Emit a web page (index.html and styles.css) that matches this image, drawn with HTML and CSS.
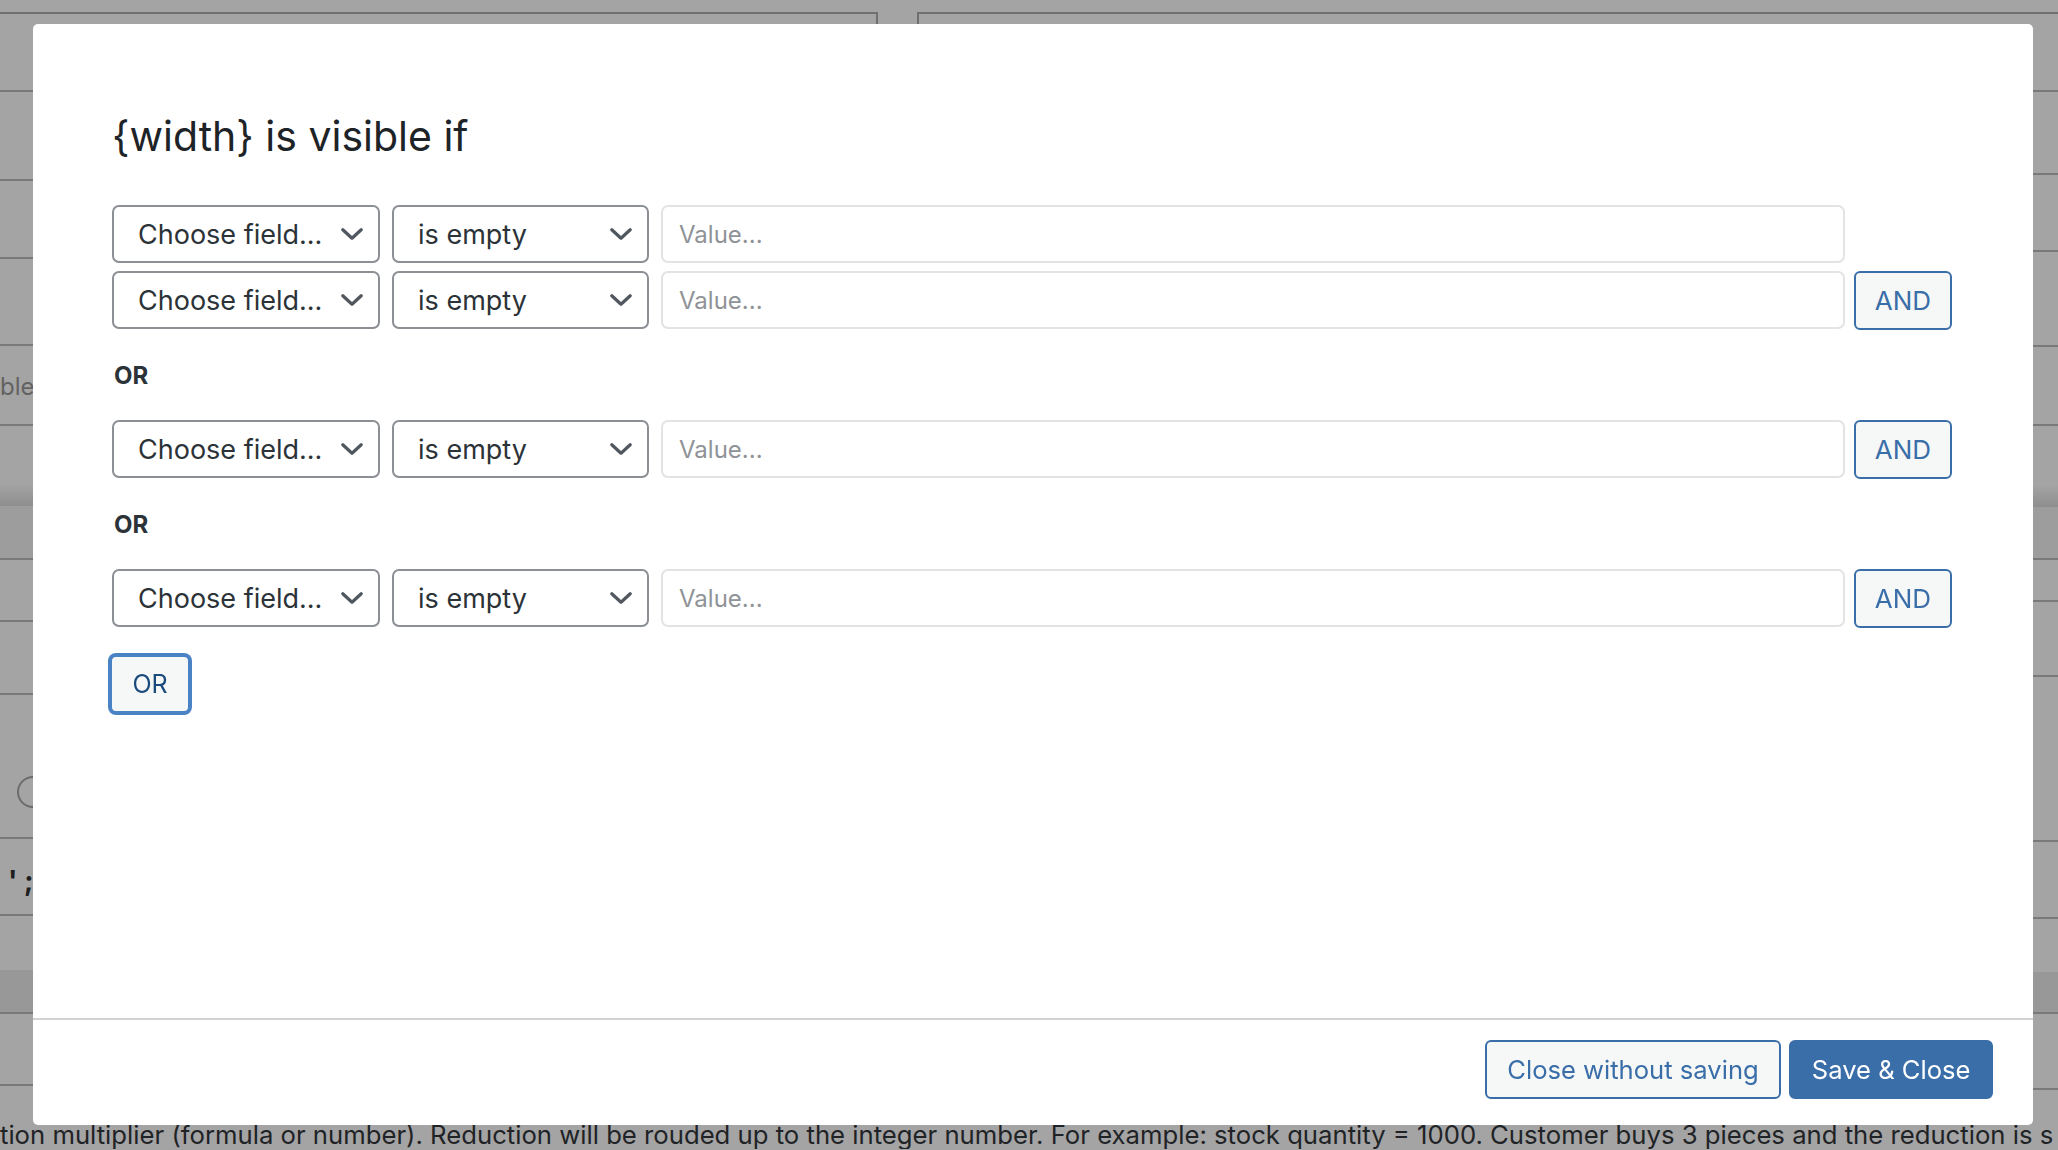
FILE: index.html
```html
<!DOCTYPE html>
<html lang="en">
<head>
<meta charset="utf-8">
<title>Visibility conditions</title>
<link rel="stylesheet" href="styles.css">
</head>
<body>
<div class="page-cols">
  <div class="page-col page-col-left">
    <div class="bg-row l1"></div>
    <div class="bg-row l2"></div>
    <div class="bg-row l3"></div>
    <div class="bg-row l4"></div>
    <div class="bg-row l5"><span class="bg-label">ble</span></div>
    <div class="bg-row bg-shade l6"></div>
    <div class="bg-row bg-dim l7"></div>
    <div class="bg-row l8"></div>
    <div class="bg-row l9"></div>
    <div class="bg-row l10"><span class="bg-radio"></span></div>
    <div class="bg-row l11"><span class="bg-code">' ;</span></div>
    <div class="bg-row bg-open l12"></div>
    <div class="bg-row bg-band l13"></div>
    <div class="bg-row l14"></div>
    <div class="bg-row bg-rest"></div>
  </div>
  <div class="page-col page-col-right">
    <div class="bg-row r1"></div>
    <div class="bg-row r2"></div>
    <div class="bg-row r3"></div>
    <div class="bg-row r4"></div>
    <div class="bg-row r5"></div>
    <div class="bg-row bg-shade r6"></div>
    <div class="bg-row bg-dim r7"></div>
    <div class="bg-row r8"></div>
    <div class="bg-row r9"></div>
    <div class="bg-row r10"></div>
    <div class="bg-row r11"></div>
    <div class="bg-row bg-open r12"></div>
    <div class="bg-row bg-band r13"></div>
    <div class="bg-row r14"></div>
    <div class="bg-row bg-rest"></div>
  </div>
</div>
<p class="page-note">tion multiplier (formula or number). Reduction will be rouded up to the integer number. For example: stock quantity = 1000. Customer buys 3 pieces and the reduction is s</p>

<div class="modal" role="dialog" aria-labelledby="modal-title">
  <div class="modal-body">
    <h2 class="modal-title" id="modal-title">{width} is visible if</h2>

    <div class="rule-group">
      <div class="rule-row">
        <div class="select select-field"><span>Choose field...</span><svg class="chevron" viewBox="0 0 22 12" width="22" height="12"><path d="M1.8 1.8 L11 10.2 L20.2 1.8"/></svg></div>
        <div class="select select-op"><span>is empty</span><svg class="chevron" viewBox="0 0 22 12" width="22" height="12"><path d="M1.8 1.8 L11 10.2 L20.2 1.8"/></svg></div>
        <input class="value-input" type="text" placeholder="Value...">
        <span class="btn-and-spacer"></span>
      </div>
      <div class="rule-row">
        <div class="select select-field"><span>Choose field...</span><svg class="chevron" viewBox="0 0 22 12" width="22" height="12"><path d="M1.8 1.8 L11 10.2 L20.2 1.8"/></svg></div>
        <div class="select select-op"><span>is empty</span><svg class="chevron" viewBox="0 0 22 12" width="22" height="12"><path d="M1.8 1.8 L11 10.2 L20.2 1.8"/></svg></div>
        <input class="value-input" type="text" placeholder="Value...">
        <button class="btn btn-secondary btn-and" type="button">AND</button>
      </div>
    </div>

    <div class="or-label">OR</div>

    <div class="rule-group">
      <div class="rule-row">
        <div class="select select-field"><span>Choose field...</span><svg class="chevron" viewBox="0 0 22 12" width="22" height="12"><path d="M1.8 1.8 L11 10.2 L20.2 1.8"/></svg></div>
        <div class="select select-op"><span>is empty</span><svg class="chevron" viewBox="0 0 22 12" width="22" height="12"><path d="M1.8 1.8 L11 10.2 L20.2 1.8"/></svg></div>
        <input class="value-input" type="text" placeholder="Value...">
        <button class="btn btn-secondary btn-and" type="button">AND</button>
      </div>
    </div>

    <div class="or-label">OR</div>

    <div class="rule-group">
      <div class="rule-row">
        <div class="select select-field"><span>Choose field...</span><svg class="chevron" viewBox="0 0 22 12" width="22" height="12"><path d="M1.8 1.8 L11 10.2 L20.2 1.8"/></svg></div>
        <div class="select select-op"><span>is empty</span><svg class="chevron" viewBox="0 0 22 12" width="22" height="12"><path d="M1.8 1.8 L11 10.2 L20.2 1.8"/></svg></div>
        <input class="value-input" type="text" placeholder="Value...">
        <button class="btn btn-secondary btn-and" type="button">AND</button>
      </div>
    </div>

    <button class="btn btn-secondary btn-or is-focused" type="button">OR</button>
  </div>
  <div class="modal-footer">
    <button class="btn btn-secondary btn-footer" type="button">Close without saving</button>
    <button class="btn btn-primary btn-footer" type="button">Save &amp; Close</button>
  </div>
</div>
</body>
</html>
```

FILE: styles.css
```css
* {
  box-sizing: border-box;
}

html,
body {
  margin: 0;
  padding: 0;
}

body {
  width: 2058px;
  height: 1150px;
  overflow: hidden;
  background: #a4a4a4;
  font-family: Inter, "Noto Sans", "Liberation Sans", sans-serif;
  color: #2c3338;
}

/* ---------- background page (dimmed) ---------- */
.page-cols {
  display: flex;
  gap: 39px;
  height: 1120px;
  padding-top: 12px;
}

.page-col {
  display: flex;
  flex-direction: column;
  border-top: 2px solid #6f6f6f;
}

.page-col-left {
  width: 878px;
  border-right: 2px solid #6f6f6f;
}

.page-col-right {
  flex: 1;
  border-left: 2px solid #6f6f6f;
}

.bg-row {
  flex: none;
  border-bottom: 2px solid #797979;
}

.bg-open {
  border-bottom: 0;
}

.bg-shade {
  border-bottom: 0;
  background: linear-gradient(to bottom, #a4a4a4 0, #a4a4a4 calc(100% - 22px), #8e8e8e 100%);
}

.bg-dim {
  background: #9d9d9d;
}

.bg-band {
  background: #989898;
}

.bg-rest {
  flex: 1;
  border-bottom: 0;
}

.l1 { height: 78px; }
.l2 { height: 89px; }
.l3 { height: 78px; }
.l4 { height: 87px; }
.l5 { height: 80px; display: flex; align-items: center; }
.l6 { height: 80px; }
.l7 { height: 54px; }
.l8 { height: 62px; }
.l9 { height: 73px; }
.l10 { height: 144px; padding: 81px 0 0 17px; }
.l11 { height: 77px; padding: 26px 0 0 8px; }
.l12 { height: 54px; }
.l13 { height: 44px; }
.l14 { height: 72px; }

.r1 { height: 78px; }
.r2 { height: 83px; }
.r3 { height: 77px; }
.r4 { height: 95px; }
.r5 { height: 79px; }
.r6 { height: 81px; }
.r7 { height: 53px; }
.r8 { height: 42px; }
.r9 { height: 75px; }
.r10 { height: 165px; }
.r11 { height: 77px; }
.r12 { height: 53px; }
.r13 { height: 42px; }
.r14 { height: 76px; }

.bg-label {
  font-size: 24px;
  color: #626262;
  margin-top: 2px;
}

.bg-radio {
  display: block;
  width: 32px;
  height: 32px;
  border: 2px solid #6c6c6c;
  border-radius: 50%;
}

.bg-code {
  display: block;
  font-size: 28px;
  font-weight: 700;
  color: #1e1e1e;
  line-height: 32px;
  white-space: pre;
}

.page-note {
  margin: 0;
  font-size: 25.7px;
  line-height: 29px;
  color: #1f2326;
  white-space: nowrap;
  overflow: hidden;
}

/* ---------- modal ---------- */
.modal {
  position: fixed;
  left: 33px;
  top: 24px;
  width: 2000px;
  height: 1101px;
  background: #ffffff;
  border-radius: 5px;
  display: flex;
  flex-direction: column;
}

.modal-body {
  flex: 1;
  padding: 87px 81px 0 79px;
}

.modal-title {
  margin: 0;
  font-size: 41px;
  line-height: 50px;
  font-weight: 400;
  color: #1d2327;
}

.rule-group {
  display: flex;
  flex-direction: column;
  gap: 8px;
}

.modal-title + .rule-group {
  margin-top: 44px;
}

.rule-row {
  display: flex;
  align-items: center;
  height: 58px;
}

.select {
  flex: none;
  height: 58px;
  display: flex;
  align-items: center;
  justify-content: space-between;
  border: 2px solid #8c8f94;
  border-radius: 7px;
  background: #ffffff;
  font-size: 27px;
  color: #2c3338;
  padding: 0 15px 0 24px;
  margin-right: 12px;
  white-space: nowrap;
}

.select-field {
  width: 268px;
}

.select-op {
  width: 257px;
}

.chevron {
  flex: none;
  fill: none;
  stroke: #50575e;
  stroke-width: 3.2;
  stroke-linecap: round;
  stroke-linejoin: round;
}

.value-input {
  flex: 1;
  min-width: 0;
  height: 58px;
  border: 2px solid #e2e3e4;
  border-radius: 7px;
  background: #ffffff;
  padding: 0 16px;
  font-family: inherit;
  font-size: 24px;
  color: #2c3338;
  margin-right: 9px;
  outline: none;
}

.value-input::placeholder {
  color: #8f9397;
  opacity: 1;
}

.btn {
  font-family: inherit;
  border-radius: 6px;
  cursor: pointer;
  white-space: nowrap;
  display: inline-flex;
  align-items: center;
  justify-content: center;
}

.btn-secondary {
  background: #f6f7f7;
  border: 2px solid #3a6ea9;
  color: #3a6ea9;
}

.btn-primary {
  background: #3a6ea9;
  border: 2px solid #3a6ea9;
  color: #ffffff;
}

.btn-and,
.btn-and-spacer {
  flex: none;
  width: 98px;
  height: 59px;
  font-size: 26px;
  padding: 0;
}

.btn-and-spacer {
  visibility: hidden;
}

.or-label {
  font-size: 24px;
  font-weight: 700;
  line-height: 29px;
  color: #2c3338;
  margin: 32px 0 30px 2px;
}

.btn-or {
  display: flex;
  margin: 28px 0 0 -2px;
  width: 80px;
  height: 58px;
  font-size: 25px;
  padding: 0;
}

.btn-or.is-focused {
  border-color: #4a82c6;
  color: #1b4a7c;
  box-shadow: 0 0 0 2px #4a82c6;
}

.modal-footer {
  flex: none;
  display: flex;
  justify-content: flex-end;
  gap: 8px;
  border-top: 2px solid #d2d2d2;
  padding: 20px 40px 26px 40px;
}

.btn-footer {
  height: 59px;
  font-size: 25.6px;
  padding: 0 20.5px;
}
```
